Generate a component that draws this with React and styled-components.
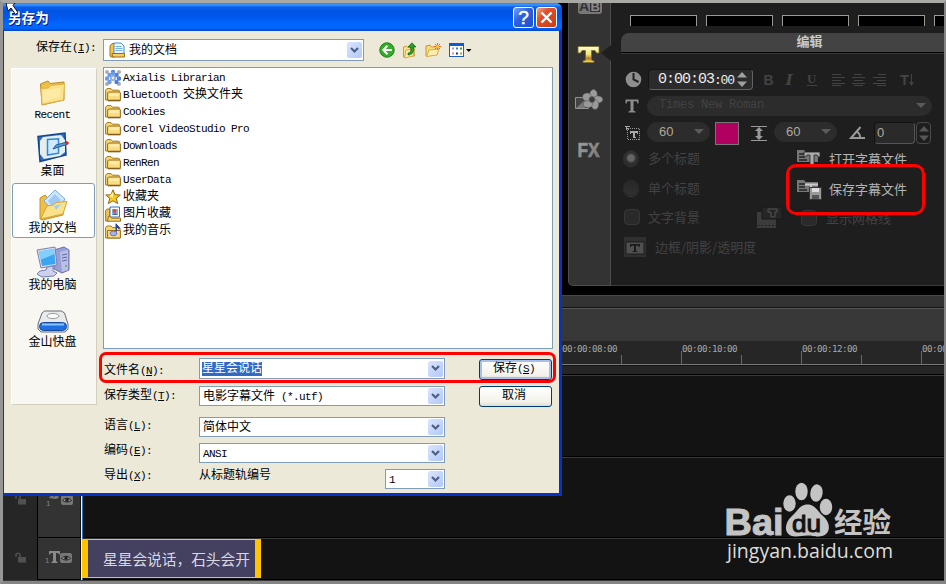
// App.jsx
import React from 'react';
import styled, { createGlobalStyle, css } from 'styled-components';

const GlobalStyle = createGlobalStyle`
  * { box-sizing: border-box; }
  body {
    margin: 0;
    background: #131313;
    font-family: "Liberation Mono", "Noto Sans CJK SC", sans-serif;
    font-size: 12px;
    overflow: hidden;
  }
  svg { display: block; flex: none; }
`;

/* ---------- text ---------- */

const Latin = styled.span`
  font-size: 11px;
  letter-spacing: -0.6px;
  white-space: pre;
`;

// Chinese glyphs take 12px, latin ones half of that
const Mixed = ({ text, hotkey, colon }) => (
  <>
    {text.split(/([\x20-\x7e]+)/).filter(Boolean).map((part, i) => (
      /[\x20-\x7e]/.test(part) ? <Latin key={i}>{part}</Latin> : part
    ))}
    {hotkey && <Latin>(<u>{hotkey}</u>){colon && ':'}</Latin>}
  </>
);

/* ---------- frame ---------- */

const Frame = styled.div`
  position: relative;
  width: 946px;
  height: 584px;
  border-style: solid;
  border-width: 3px 2px 3px 3px;
  border-color: #a9a9a5 #858585 #858585 #969696;
  background: #000;
  overflow: hidden;
  display: flex;
  flex-direction: column;
`;

/* ---------- editor: upper part ---------- */

const Workspace = styled.div`
  display: flex;
  height: 292px;
  padding: 0 0 9px 565px;
  flex: none;
`;

const Sidebar = styled.div`
  position: relative;
  width: 43px;
  background: #333;
  border: 1px solid #4d4d4d;
  border-top: 0;
  border-radius: 0 0 0 5px;
  display: flex;
  flex-direction: column;
  align-items: center;
  flex: none;
`;

const Notch = styled.div`
  position: absolute;
  right: -1px;
  top: 42px;
  border: 8px solid transparent;
  border-left: 0;
  border-right: 10px solid #1e1e1e;
`;

const Panel = styled.div`
  flex: 1;
  background: #1e1e1e;
  border-bottom: 1px solid #3c3c3c;
  padding-top: 12px;
  overflow: hidden;
`;

const Swatches = styled.div`
  display: flex;
  gap: 9px;
  height: 11px;
  padding-left: 19px;
`;

const Swatch = styled.div`
  width: 67px;
  flex: none;
  background: #000;
  border: 1px solid #9a9a92;
  border-bottom: 0;
`;

const TabTitle = styled.div`
  height: 21px;
  margin: 7px 0 0 10px;
  padding: 0 0 0 54px;
  background: #434343;
  border-bottom: 1px solid #3a3a3a;
  box-shadow: inset 0 -1px #000;
  border-radius: 8px 0 0 0;
  color: #c8c8c8;
  font: bold 13px/16px "Noto Sans CJK SC", sans-serif;
  text-align: center;
`;

const ControlRow = styled.div`
  display: flex;
  align-items: ${p => p.$align || 'center'};
  height: ${p => p.$h}px;
  margin-top: ${p => p.$top}px;
  padding-left: 14px;
`;

const Gap = styled.div`
  width: ${p => p.$w}px;
  height: ${p => p.$h || 1}px;
  flex: none;
`;

const Drop = styled.div`
  padding-top: ${p => p.$top}px;
`;

const TimeBox = styled.div`
  width: 105px;
  height: 21px;
  border: 1px solid #151515;
  border-right-color: #626262;
  border-bottom-color: #626262;
  border-radius: 4px;
  background: #2b2b2b;
  color: #eee;
  display: flex;
  align-items: center;
  padding-left: 9px;
  font: 15px/19px "Liberation Mono", monospace;
  letter-spacing: -1px;
  flex: none;
  small { font-size: 13px; letter-spacing: -1.2px; width: 23px; padding-top: 2px; }
`;

const Pill = styled.div`
  width: ${p => p.$w}px;
  height: 20px;
  border-radius: 10px;
  background: #2c2c2c;
  color: ${p => p.$color || '#b0a898'};
  display: flex;
  align-items: center;
  justify-content: space-between;
  padding: 0 6px 1px 12px;
  font: ${p => p.$size || 13}px/15px "${p => p.$mono ? 'Liberation Mono' : 'Liberation Sans'}", sans-serif;
  letter-spacing: ${p => p.$spacing || 0}px;
  flex: none;
`;

const PillCaret = styled.i`
  border: 5px solid transparent;
  border-top-color: #5a5a5a;
  border-bottom: 0;
`;

const ColorBox = styled.div`
  width: 24px;
  height: 23px;
  border: 1px solid #777;
  background: #b1005f;
  flex: none;
`;

const AngleBox = styled.div`
  width: 41px;
  height: 22px;
  border: 1px solid #111;
  border-right-color: #555;
  border-bottom-color: #555;
  border-radius: 4px;
  background: #2a2a2a;
  color: #b0a898;
  padding-left: 2px;
  font: 13px/19px "Liberation Sans", sans-serif;
`;

const Spinner = styled.div`
  width: 15px;
  height: 22px;
  margin-left: 1px;
  border: 1px solid #4a4a4a;
  border-radius: 4px;
  display: flex;
  align-items: center;
  justify-content: center;
`;

const Options = styled.div`
  display: flex;
  padding-left: 12px;
  margin-top: 5px;
`;

const OptionColumn = styled.div`
  width: ${p => p.$w}px;
  flex: none;
`;

const Option = styled.div`
  display: flex;
  align-items: center;
  height: 30px;
  margin-top: ${p => p.$top || 0}px;
  padding-left: ${p => p.$indent || 0}px;
  gap: ${p => p.$gap || 9}px;
  color: ${p => p.$bright ? '#b4b4b4' : '#424242'};
  font: 13px/30px "Noto Sans CJK SC", sans-serif;
  white-space: nowrap;
`;

const Radio = styled.i`
  width: 16px;
  height: 16px;
  border-radius: 50%;
  border: 1px solid #2b2b2b;
  background: ${p => p.$on
    ? 'radial-gradient(circle, #666 0 3px, #303030 5px)'
    : 'linear-gradient(#272727, #313131)'};
  box-shadow: 0 1px 1px #3a3a3a;
  flex: none;
`;

const Check = styled.i`
  width: 16px;
  height: 16px;
  border-radius: 4px;
  border: 1px solid #383838;
  background: #2a2a2a;
  flex: none;
`;

/* ---------- editor: timeline ---------- */

const ToolStrip = styled.div`
  height: 13px;
  background: #333;
  border-top: 1px solid #484848;
  border-bottom: 1px solid #151515;
  flex: none;
`;

const ToolBand = styled.div`
  height: 33px;
  background: #383838;
  border-top: 1px solid #555;
  flex: none;
`;

const Ruler = styled.div`
  height: 24px;
  padding-left: 438px;
  background: #262626;
  border-bottom: 1px solid #777;
  display: flex;
  overflow: hidden;
  flex: none;
`;

const Tick = styled.div`
  width: 120px;
  height: 24px;
  flex: none;
  padding-left: 1px;
  color: #a8a8a8;
  font: 9.2px/15px "DejaVu Sans Mono", monospace;
  letter-spacing: -0.54px;
  background:
    linear-gradient(#666, #666) 0 10px / 1px 14px no-repeat,
    linear-gradient(#666, #666) 60px 14px / 1px 10px no-repeat;
`;

const RulerFoot = styled.div`
  height: 10px;
  background: #252525;
  border-top: 1px solid #151515;
  border-bottom: 1px solid #000;
  flex: none;
`;

const Track = styled.div`
  display: flex;
  height: ${p => p.$h}px;
  background: #131313;
  border-bottom: 1px solid #000;
  border-top: 1px solid #393939;
  flex: none;
`;

const LockCell = styled.div`
  width: 35px;
  margin: -1px 0;
  background: #262626;
  border-right: 1px solid #000;
  padding: ${p => p.$top}px 0 0 12px;
`;

const TrackHead = styled.div`
  width: 43px;
  background: #333;
  border-right: 1px solid #111;
  padding: ${p => p.$top}px 0 0 7px;
`;

const Playhead = styled.div`
  width: 2px;
  margin: -1px 0;
  background: #f4f4f4;
  border-right: 1px solid #2d6db5;
`;

const Clip = styled.div`
  width: 179px;
  height: 39px;
  margin-left: -1px;
  border: solid #ffc400;
  border-width: 1px 6px;
  background: #444060;
  color: #d8d8e4;
  padding-left: 15px;
  font: 14.7px/38px "Noto Sans CJK SC", sans-serif;
  white-space: nowrap;
  overflow: hidden;
`;

/* ---------- dialog ---------- */

const Dialog = styled.div`
  position: absolute;
  left: 0;
  top: 0;
  width: 559px;
  height: 493px;
  background: #ece9d8;
  border: solid #0831c8;
  border-width: 0 3px 3px 1px;
  border-radius: 6px 6px 0 0;
  color: #000;
  line-height: 16px;
`;

const TitleBar = styled.div`
  height: 28px;
  margin: 0 -3px 0 -1px;
  padding: 0 5px 0 5px;
  border-radius: 0 6px 0 0;
  background: linear-gradient(#2f83f2 0, #3c95ff 2px, #0a60ec 4px, #0054e3 8px, #0058ee 15px, #0066ff 20px, #0066ff 25px, #0045c8 28px);
  display: flex;
  align-items: center;
  gap: 2px;
`;

const Title = styled.div`
  flex: 1;
  color: #fff;
  font: bold 13.6px/28px "Noto Sans CJK SC", sans-serif;
  text-shadow: 1px 1px #0a1883;
`;

const CaptionButton = styled.div`
  width: 21px;
  height: 21px;
  margin-top: 1px;
  border: 1px solid #fff;
  border-radius: 3px;
  background: ${p => p.$close
    ? 'linear-gradient(135deg, #f0a088, #e0502c 35%, #c83c14)'
    : 'linear-gradient(135deg, #7aa2f4, #2f62e0 40%, #1c50d0)'};
  display: flex;
  align-items: center;
  justify-content: center;
  color: #fff;
  font: 19px/19px "Liberation Sans", sans-serif;
  -webkit-text-stroke: 0.5px #fff;
`;

const LookInRow = styled.div`
  display: flex;
  height: 36px;
  padding: 8px 0 0 32px;
`;

const LookInLabel = styled.div`
  width: 67px;
  padding-top: 1px;
  white-space: nowrap;
`;

const DialogTools = styled.div`
  display: flex;
  align-items: center;
  height: 22px;
  padding-left: 15px;
  gap: 7px;
`;

const Combo = styled.div`
  width: ${p => p.$w}px;
  height: ${p => p.$h || 20}px;
  border: 1px solid #7f9db9;
  background: #fff;
  display: flex;
  align-items: center;
  padding: 0 1px 0 ${p => p.$pad || 3}px;
  gap: 3px;
  flex: none;
`;

const ComboText = styled.div`
  flex: 1;
  padding-top: 1px;
  white-space: nowrap;
`;

const Selected = styled.span`
  display: inline-block;
  height: 14px;
  line-height: 14px;
  background: #316ac5;
  color: #fff;
  margin-left: -1px;
`;

const DropButton = styled.div`
  width: 15px;
  height: 16px;
  border-radius: 2px;
  background: linear-gradient(135deg, #dbe5fd, #b0c8f8);
  display: flex;
  align-items: center;
  justify-content: center;
`;

const Main = styled.div`
  display: flex;
  padding-left: 7px;
`;

const Places = styled.div`
  width: 86px;
  height: 337px;
  margin: 1px 6px 0 0;
  border: 1px solid #fff;
  border-right-color: #d4d0c0;
  border-bottom-color: #d4d0c0;
  background: #f8f7f2;
  flex: none;
`;

const Place = styled.div`
  height: 55px;
  margin: 0 1px 2px 0;
  border: 1px solid transparent;
  border-radius: 3px;
  display: flex;
  flex-direction: column;
  align-items: center;
  justify-content: flex-end;
  padding: 0 2px 0 0;
  ${p => p.$active && css`
    background: #fff;
    border-color: #7f9db9;
  `}
`;

const PlaceIcon = styled.div`
  height: ${p => p.$h}px;
  display: flex;
  align-items: flex-start;
`;

const FileList = styled.div`
  width: 450px;
  height: 282px;
  border: 1px solid #7f9db9;
  background: #fff;
  padding: 1px;
`;

const FileRow = styled.div`
  display: flex;
  align-items: center;
  height: 17px;
  gap: 2px;
  white-space: nowrap;
`;

const Form = styled.div`
  width: 450px;
  padding-top: 9px;
`;

const FormRow = styled.div`
  display: flex;
  height: ${p => p.$h}px;
  padding-left: 1px;
`;

const FormLabel = styled.div`
  width: ${p => p.$w || 95}px;
  margin-top: ${p => p.$top || 0}px;
  white-space: nowrap;
`;

const Button = styled.div`
  width: 73px;
  height: 21px;
  margin-left: 34px;
  margin-top: ${p => p.$top || 0}px;
  border: 1px solid #003c74;
  border-radius: 3px;
  background: linear-gradient(#fff, #f3f2ea 80%, #dedacc);
  box-shadow: ${p => p.$primary ? 'inset 0 0 0 2px #a5bff0' : 'none'};
  padding-right: 3px;
  text-align: center;
  line-height: 19px;
`;

const Callout = styled.div`
  position: absolute;
  left: ${p => p.$x - 3}px;
  top: ${p => p.$y - 3}px;
  width: ${p => p.$w}px;
  height: ${p => p.$h}px;
  border: 3px solid #f00;
  border-radius: ${p => p.$r}px;
`;

const Watermark = styled.svg`
  position: absolute;
  left: 717px;
  top: 475px;
`;

const Cursor = styled.svg`
  position: absolute;
  left: 2px;
  top: 0;
`;

/* ---------- icons ---------- */

const FolderIcon = () => (
  <svg width="16" height="15" viewBox="0 0 16 15">
    <path d="M.6 13V3.2L2 1.6h4l1.4 1.600h6.400l.8 1V13z" fill="#f7d774" stroke="#a4761c" />
    <path d="M2.600 13.200V6l1-1h10.800l1 .8v7.400z" fill="#f9dd85" stroke="#9a6c18" />
    <path d="M4 7h10M4 8.200h10" stroke="#fff3bc" />
    <path d="M3 13.800h12.500" stroke="#775012" />
  </svg>
);

const GearIcon = () => (
  <svg width="16" height="16" viewBox="0 0 16 16">
    {[[2, 2], [14, 2], [2, 14], [14, 14]].map(([x, y]) => <circle key={x + '-' + y} cx={x} cy={y} r="2" fill="#aaacb4" />)}
    {[[8, 2], [4.500, 5], [11.500, 5], [2, 8.500], [14, 8.500], [4.500, 12], [11.500, 12], [8, 3.500]].map(([x, y], i) => (
      <circle key={i} cx={x} cy={y} r="2.200" fill={i % 2 ? '#6a9cec' : '#4c80dc'} />
    ))}
    <circle cx="8" cy="8" r="3" fill="#8fa6cf" /><circle cx="8" cy="8" r="1.400" fill="#dfe8f8" />
  </svg>
);

const StarIcon = () => (
  <svg width="16" height="16" viewBox="0 0 16 16">
    <path d="M8 .8l2 4.900 5.300.3-4.100 3.400 1.500 5.200L8 11.800l-4.700 2.800 1.500-5.200L.7 6 6 5.700z" fill="#fcc81e" stroke="#916914" />
    <path d="M8 3v6L4.500 7z" fill="#fff29c" />
  </svg>
);

const PicturesIcon = () => (
  <svg width="16" height="16" viewBox="0 0 16 16">
    <path d="M.6 15V4.500L2 3h3v12z" fill="#f0c350" stroke="#a4761c" />
    <path d="M5 1h9.500v10H5z" fill="#fff" stroke="#3770b0" />
    <path d="M7 3h6v6H7z" fill="#79b7f2" /><circle cx="9.500" cy="5" r="2" fill="#de4b38" /><path d="M7 9l3-2 3 2z" fill="#3b6fbc" />
    <path d="M2.500 15.200l1-5H5l1.500 2h9v3z" fill="#f7d774" stroke="#9a6c18" />
  </svg>
);

const MusicIcon = () => (
  <svg width="16" height="16" viewBox="0 0 16 16">
    <path d="M.6 15V4.600L2 3h4l1.400 1.600H15V15z" fill="#f7d774" stroke="#a4761c" />
    <path d="M2.600 15V7.500h12.800V15z" fill="#f9dd85" stroke="#9a6c18" />
    <path d="M11 11V.8c1 2 3.500 2 3 5-1-1.500-2-1.500-2-1.500" fill="#364a9a" stroke="#2b3d86" />
    <ellipse cx="8.500" cy="10.500" rx="3.300" ry="2.400" fill="#a9b3e8" stroke="#6c78c0" />
  </svg>
);

const DocsIcon = () => (
  <svg width="17" height="16" viewBox="0 0 17 16">
    <path d="M1 14V4l2-2.500h3V15H2z" fill="#f0c350" stroke="#a4761c" />
    <path d="M5 1h7l3 3v8H5z" fill="#eef7ff" stroke="#4a8bcb" />
    <path d="M6.500 4.500h6M6.500 6.500h7M6.500 8.500h7" stroke="#74b3e6" />
    <path d="M3.500 15l-.5-3.500h12.500V15z" fill="#f6cf6b" stroke="#9a6c18" />
  </svg>
);

const BigFolderIcon = () => (
  <svg width="27" height="26" viewBox="0 0 27 26">
    <path d="M1.500 4L9 1l2.500 2.500L25 2v18L3 25z" fill="#eebf45" stroke="#b98a26" />
    <path d="M2 8.500L9.500 8l2-2.500L25.500 4l-1 16L3 24.500z" fill="#fbe18a" stroke="#e0b649" />
    <path d="M4 10l18-2-1 9L4 22z" fill="#fdefb0" opacity=".7" />
  </svg>
);

const DesktopIcon = () => (
  <svg width="32" height="31" viewBox="0 0 32 31">
    <path d="M1 4.500L28 1l1 22-26 6.500z" fill="#2f6fc8" stroke="#15468f" strokeWidth="1.500" />
    <path d="M6 5l18-2 4 5v12l-5 4-16 3-4-5V9z" fill="#e4efec" />
    <path d="M10.500 7.500l11-.8v14.500l-11 1.800z" fill="#cdeafe" stroke="#3187d6" strokeWidth="1.500" />
    <path d="M16 17l3-4 11-3v2.500L20 15.500z" fill="#5a9ad8" stroke="#235a98" />
    <circle cx="30" cy="11" r="1.800" fill="#d02b20" />
  </svg>
);

const MyDocsIcon = () => (
  <svg width="30" height="32" viewBox="0 0 30 32">
    <path d="M2 9l5-3 3 3 16 1-1 16-20 5-3-1z" fill="#eebf45" stroke="#c4942c" />
    <path d="M6 12L17 1l10 9-10 14z" fill="#cfe6fc" stroke="#75a9dc" />
    <path d="M10 12l7-7 6 6-8 8z" fill="#9dc9f4" />
    <path d="M2.500 30L9 17l6-1 3-2.500 11-1L25 25z" fill="#fbe18a" stroke="#d5a434" />
    <path d="M16 17l7-2-5 6z" fill="#9dcdf4" />
  </svg>
);

const ComputerIcon = () => (
  <svg width="34" height="32" viewBox="0 0 34 32">
    <path d="M18 4l10-3 5 3v20l-7 3-8-4z" fill="#9aa0d4" stroke="#6b6fae" />
    <path d="M24 6l8-2v20l-6 2z" fill="#b9bfe6" />
    <path d="M26 9l5-1M26 12l5-1M26 15l5-1" stroke="#6066a2" /><circle cx="30" cy="20" r="1" fill="#4fbf3c" />
    <path d="M11 21l6-1v5l4 2-3 3-12 1-5-3 3-3 6-1z" fill="#cdd1ec" stroke="#777cae" />
    <path d="M1 4l18-3 2 18-16 3z" fill="#d9ddf0" stroke="#7a80b4" />
    <path d="M3 5.500l15-2.500 1.500 15L6 20z" fill="#3ba5f0" /><path d="M3 5.500L18 3l.5 5L4.500 14z" fill="#83d0fc" />
  </svg>
);

const DriveIcon = () => (
  <svg width="32" height="23" viewBox="0 0 32 23">
    <path d="M7.500 1h17l3 2 3.500 11v5l-3 3H4l-3-3v-5L5 3z" fill="#e9eaec" stroke="#696c70" />
    <ellipse cx="16" cy="6" rx="6" ry="2.600" fill="#f9f9f9" stroke="#999" />
    <rect x="2.500" y="12.500" width="27" height="8" rx="4" fill="#1d6fe2" stroke="#184a9c" />
    <path d="M5 14.500h22" stroke="#8ac2ff" strokeWidth="2" />
  </svg>
);

const Chevron = () => (
  <svg width="9" height="7" viewBox="0 0 9 7"><path d="M1 1l3.500 3.500L8 1" fill="none" stroke="#4d6185" strokeWidth="2.200" /></svg>
);

const BackIcon = () => (
  <svg width="16" height="16" viewBox="0 0 16 16">
    <circle cx="8" cy="8" r="7.200" fill="#32ad27" stroke="#1c7c18" />
    <path d="M8.500 3.800L4.300 8l4.200 4.200M4.800 8H13" fill="none" stroke="#fff" strokeWidth="2" />
  </svg>
);

const UpIcon = () => (
  <svg width="16" height="17" viewBox="0 0 16 17">
    <path d="M1.500 15V5l3-1 1 1.500 6-.5 1 9z" fill="#fae08a" stroke="#cc9b33" />
    <path d="M2.500 16l1.500-8 9-1-2 7z" fill="#fdeeb0" stroke="#d9ab45" />
    <path d="M6 11c3 0 3-3 2.500-6H6L10 .8 14 5h-2.500c1 6-2 8-5.500 8z" fill="#2c9b28" stroke="#146416" strokeWidth=".7" />
  </svg>
);

const NewFolderIcon = () => (
  <svg width="17" height="16" viewBox="0 0 17 16">
    <path d="M1 14V4l4-.8L6.500 5l6-.5V12z" fill="#f8dc7c" stroke="#c8962f" />
    <path d="M1.500 14.500L4 8l10-1-2 6z" fill="#fdeeb0" stroke="#d9ab45" />
    <path d="M12.500 1v7M9 4.500h7M10 2l5 5M15 2l-5 5" stroke="#f05a24" /><circle cx="12.500" cy="4.500" r="1.500" fill="#ffd03c" />
  </svg>
);

const ViewIcon = () => (
  <svg width="24" height="15" viewBox="0 0 24 15">
    <rect x=".5" y=".5" width="14" height="13" fill="#fff" stroke="#1e5fbe" /><path d="M0 1.500h15" stroke="#0b5cd0" strokeWidth="3" />
    <path d="M3 5.500h2" stroke="#a898c0" strokeWidth="2" /><path d="M3 10.500h2" stroke="#f09078" strokeWidth="2" />
    <path d="M7 5.500h2" stroke="#3c80e0" strokeWidth="2" /><path d="M7 10.500h2" stroke="#1c30a0" strokeWidth="2" />
    <path d="M11 5.500h2" stroke="#3a9c3a" strokeWidth="2" /><path d="M11 10.500h2" stroke="#c09a20" strokeWidth="2" />
    <path d="M17 6h5.500l-2.700 3z" fill="#000" />
  </svg>
);

const SideIcons = () => (
  <svg width="41" height="170" viewBox="0 0 41 170">
    <defs>
      <linearGradient id="gold" x1="0" y1="0" x2="0" y2="1"><stop offset="0" stopColor="#fffbd8" /><stop offset=".5" stopColor="#f4e46c" /><stop offset=".75" stopColor="#b57a2c" /><stop offset="1" stopColor="#ffe94a" /></linearGradient>
      <linearGradient id="steel" x1="0" y1="0" x2="1" y2="1"><stop offset="0" stopColor="#a8a8a8" /><stop offset="1" stopColor="#707070" /></linearGradient>
    </defs>
    <rect x="9" y="-6" width="24" height="17" rx="3" fill="#777" />
    <path d="M21 -3h10v12H21z" fill="#333" />
    <text x="10" y="8" fontSize="14" fontWeight="bold" fontFamily="Liberation Sans" fill="#333">A</text>
    <text x="21.500" y="8" fontSize="13" fontWeight="bold" fontFamily="Liberation Sans" fill="#8a8a8a">B</text>
    <path d="M9 43.500h21V50h-2.500l-1.500-2.500h-3.500V57l2.500 1v1.500H14V58l2.500-1v-9.500H13L11.500 50H9z" fill="url(#gold)" stroke="#786c2c" strokeWidth=".8" />
    <path d="M6.500 94.500h13v11h-13z" fill="#444" stroke="#929292" /><path d="M7 105l9-8v8z" fill="#777" />
    <g fill="#9a9a9a" stroke="#555" strokeWidth=".5">
      <ellipse cx="24.500" cy="91.500" rx="3.800" ry="5" /><ellipse cx="29" cy="96.500" rx="4.800" ry="3.600" /><ellipse cx="26" cy="101.500" rx="3.700" ry="5" />
      <ellipse cx="19" cy="101" rx="4.500" ry="3.600" /><ellipse cx="18" cy="94" rx="4.500" ry="4" />
    </g>
    <circle cx="23" cy="96.500" r="3" fill="#3a3a3a" stroke="#666" />
    <text x="8.500" y="153.500" fontSize="20.500" fontWeight="bold" fontFamily="Liberation Sans" textLength="22" lengthAdjust="spacingAndGlyphs" fill="url(#steel)" stroke="#8c8c8c" strokeWidth=".7">FX</text>
  </svg>
);

const ClockIcon = () => (
  <svg width="17" height="17" viewBox="0 0 17 17"><circle cx="8.500" cy="8.500" r="7.800" fill="#8f8f8f" /><path d="M8.500 2v6.500l5 2.500" fill="none" stroke="#222" strokeWidth="2" /></svg>
);

const TIcon = () => (
  <svg width="14" height="14" viewBox="0 0 14 14"><path d="M.5.5h13v4h-1L11.500 2.300H8.500v9.500l2 .7v1h-7v-1l2-.7V2.300h-3L1.500 4.500h-1z" fill="#8c8c8c" /></svg>
);

const SizeIcon = () => (
  <svg width="16" height="16" viewBox="0 0 16 16" shapeRendering="crispEdges">
    <path d="M2.500 3.500h12v11h-12z" fill="none" stroke="#999" strokeDasharray="1 1" />
    <path d="M0 1l4 4M1.500 5V1.500h3" stroke="#aaa" fill="none" /><path d="M5 6h8v3h-1l-1-1.500h-1V12l1 1H7l1-1V7.500H7L6 9H5z" fill="#aaa" />
  </svg>
);

const SpacingIcon = () => (
  <svg width="16" height="17" viewBox="0 0 16 17"><path d="M0 1.500h16M0 15.500h16" stroke="#999" /><path d="M8 2l4 4H9.500v5H12l-4 4-4-4h2.500V6H4z" fill="#999" /></svg>
);

const AngleIcon = () => (
  <svg width="17" height="15" viewBox="0 0 17 15"><path d="M16 13H2L11.500 2M8 6.500c2 1.500 3 3.500 3 6" fill="none" stroke="#999" strokeWidth="2" /></svg>
);

const UpDown = ({ color }) => (
  <svg width="10" height="15" viewBox="0 0 10 15"><path d="M0 5.500L5 0l5 5.500zM0 9.500L5 15l5-5.500z" fill={color} /></svg>
);

const FormatIcons = () => (
  <svg width="152" height="14" viewBox="0 0 152 14" stroke="#434343" fill="#434343">
    <g stroke="none" fontWeight="bold" fontFamily="Liberation Sans" fontSize="14">
      <text x="-.5" y="12">B</text>
      <text x="21" y="12" fontStyle="italic" fontFamily="Liberation Serif" fontSize="16" textLength="8" lengthAdjust="spacingAndGlyphs">I</text>
      <text x="43" y="10" fontFamily="Liberation Serif" fontSize="13">U</text>
      <text x="136" y="12" fontSize="15" textLength="9" lengthAdjust="spacingAndGlyphs">T</text>
    </g>
    <path d="M43 12.500h10" />
    <path d="M67.500 1.500h9M67.500 4.500h13M67.500 7.500h9M67.500 10.500h13M67.500 12.500h9M90 1.500h8M88 4.500h13M90 7.500h9M88 10.500h13M90 12.500h9M114 1.500h8M109 4.500h13M113 7.500h9M109 10.500h13M113 12.500h9" shapeRendering="crispEdges" />
    <path d="M147.500 1v10" /><path d="M145 9h5l-2.500 4z" stroke="none" />
  </svg>
);

const SubtitleIcon = ({ save }) => (
  <svg width="27" height="23" viewBox="0 0 27 23">
    <path d="M1 2h7l1.500 2H22v10H1z" fill="#777" />
    <path d="M3 6h6M3 9h6M3 12h8" stroke="#222" strokeWidth="1.300" />
    {save ? (
      <>
        <path d="M9 6.500h13M15 7v6" stroke="#ccc" strokeWidth="2" />
        <path d="M13.500 9.500h12v12h-12z" fill="#999" stroke="#333" />
        <path d="M16 10h7v4h-7z" fill="#ddd" /><path d="M16 17h7v4h-7z" fill="#555" />
      </>
    ) : <path d="M8 4h16v5h-1.500L21 7h-3v10l2 1v1h-8v-1l2-1V7h-3L9.500 9H8z" fill="#aaa" stroke="#222" strokeWidth=".8" />}
  </svg>
);

const BackdropIcon = () => (
  <svg width="27" height="23" viewBox="0 0 27 23">
    <path d="M1 6h19v16H1z" fill="#3c3c3c" /><path d="M2 19.500h18" stroke="#191919" strokeDasharray="1.500 2" />
    <path d="M6 1h20v12H6z" fill="#262626" stroke="#181818" />
    <path d="M12 3h9v3h-2v5h-4V6h-3z" fill="#242424" stroke="#555" />
  </svg>
);

const BorderIcon = () => (
  <svg width="22" height="20" viewBox="0 0 22 20">
    <path d="M0 0h22v20H0z" fill="#303030" /><path d="M2 5h18v12H2z" fill="#505050" stroke="#1c1c1c" />
    <path d="M6 7h10v3h-1l-.5-1.300H12V14h1.500v1h-5v-1H10V8.700H7.500L7 10H6z" fill="#1c1c1c" />
  </svg>
);

const LockIcon = () => (
  <svg width="11" height="11" viewBox="0 0 11 11"><path d="M1 5V2.500C1 .8 5 .8 5 3v2" fill="none" stroke="#505050" strokeWidth="1.500" /><path d="M3 5h8v5.500H3z" fill="#505050" /></svg>
);

const EyeIcon = () => (
  <>
    <rect x="15" y="2" width="12" height="10" rx="2" fill="#777" />
    <path d="M16.500 7.500c2.500-3 6-3 9 0-3 2-6 2-9 0z" fill="#999" stroke="#222" /><circle cx="21" cy="7" r="1.800" fill="#222" />
  </>
);

const TitleTrackIcon = () => (
  <svg width="28" height="14" viewBox="0 0 28 14">
    <text x="0" y="12" fontSize="8" fontFamily="Liberation Sans" fill="#808080">1</text>
    <path d="M4 0h11v3.500h-1L13 2h-2v8l1.500 1v1h-6v-1L8 10V2H6L5 3.500H4z" fill="#8a8a8a" />
    <EyeIcon />
  </svg>
);

const OverlayTrackIcon = () => (
  <svg width="30" height="14" viewBox="0 0 30 14">
    <text x="1" y="13" fontSize="8" fontFamily="Liberation Sans" fill="#808080">1</text>
    <path d="M4 5l3-4 2 3 3-3 2 4-4 1z" fill="#777" />
    <g transform="translate(1 0)"><EyeIcon /></g>
  </svg>
);

/* ---------- data ---------- */

const places = [
  { label: 'Recent', Icon: BigFolderIcon, h: 27 },
  { label: '桌面', Icon: DesktopIcon, h: 32 },
  { label: '我的文档', Icon: MyDocsIcon, h: 32, active: true },
  { label: '我的电脑', Icon: ComputerIcon, h: 32 },
  { label: '金山快盘', Icon: DriveIcon, h: 25 },
];

const files = [
  { name: 'Axialis Librarian', Icon: GearIcon },
  { name: 'Bluetooth 交换文件夹', Icon: FolderIcon },
  { name: 'Cookies', Icon: FolderIcon },
  { name: 'Corel VideoStudio Pro', Icon: FolderIcon },
  { name: 'Downloads', Icon: FolderIcon },
  { name: 'RenRen', Icon: FolderIcon },
  { name: 'UserData', Icon: FolderIcon },
  { name: '收藏夹', Icon: StarIcon },
  { name: '图片收藏', Icon: PicturesIcon },
  { name: '我的音乐', Icon: MusicIcon },
];

const ticks = ['00:00:06:00', '00:00:08:00', '00:00:10:00', '00:00:12:00', '00:00:14:00'];

/* ---------- sections ---------- */

const EditPanel = () => (
  <Panel>
    <Swatches>
      {[0, 1, 2, 3, 4].map(i => <Swatch key={i} />)}
    </Swatches>
    <TabTitle>编辑</TabTitle>
    <ControlRow $h={21} $top={15}>
      <ClockIcon />
      <Gap $w={6} />
      <TimeBox>0:00:03<small>:00</small><UpDown color="#a0a0a0" /></TimeBox>
      <Gap $w={11} />
      <FormatIcons />
    </ControlRow>
    <ControlRow $h={19} $top={6}>
      <TIcon />
      <Gap $w={8} />
      <Pill $w={285} $color="#424242" $mono $size={12} $spacing={-0.2}>Times New Roman<PillCaret /></Pill>
    </ControlRow>
    <ControlRow $h={23} $top={7} $align="flex-start">
      <Drop $top={3}><SizeIcon /></Drop>
      <Gap $w={6} />
      <Pill $w={63}>60<PillCaret /></Pill>
      <Gap $w={5} />
      <ColorBox />
      <Gap $w={12} />
      <Drop $top={3}><SpacingIcon /></Drop>
      <Gap $w={7} />
      <Pill $w={63}>60<PillCaret /></Pill>
      <Gap $w={12} />
      <Drop $top={3}><AngleIcon /></Drop>
      <Gap $w={8} />
      <AngleBox>0</AngleBox>
      <Spinner><UpDown color="#555" /></Spinner>
    </ControlRow>
    <Options>
      <OptionColumn $w={133}>
        <Option $top={-7}><Radio $on />多个标题</Option>
        <Option><Radio />单个标题</Option>
        <Option $top={-1} $gap={8} $indent={1}><Check />文字背景</Option>
        <Option $gap={9} $indent={1}><BorderIcon />边框/阴影/透明度</Option>
      </OptionColumn>
      <OptionColumn $w={40}>
        <Gap $w={1} $h={56} />
        <BackdropIcon />
      </OptionColumn>
      <OptionColumn $w={140}>
        <Option $bright $gap={6} $top={-6}><SubtitleIcon />打开字幕文件</Option>
        <Option $bright $gap={6}><SubtitleIcon save />保存字幕文件</Option>
        <Option $top={-1} $indent={5}><Check />显示网格线</Option>
      </OptionColumn>
    </Options>
  </Panel>
);

const Timeline = () => (
  <>
    <ToolStrip />
    <ToolBand />
    <Ruler>
      {ticks.map(t => <Tick key={t}>{t}</Tick>)}
    </Ruler>
    <RulerFoot />
    <Track $h={82}><LockCell /><TrackHead /><Playhead /></Track>
    <Track $h={81}>
      <LockCell $top={37}><LockIcon /></LockCell>
      <TrackHead $top={35}><OverlayTrackIcon /></TrackHead>
      <Playhead />
    </Track>
    <Track $h={42}>
      <LockCell $top={14}><LockIcon /></LockCell>
      <TrackHead $top={12}><TitleTrackIcon /></TrackHead>
      <Playhead />
      <Clip>星星会说话，石头会开</Clip>
    </Track>
    <Track $h={2} />
  </>
);

const SaveDialog = () => (
  <Dialog>
    <TitleBar>
      <Title>另存为</Title>
      <CaptionButton>?</CaptionButton>
      <CaptionButton $close>
        <svg width="13" height="13" viewBox="0 0 13 13"><path d="M1.500 1.500l10 10M11.500 1.500l-10 10" stroke="#fff" strokeWidth="2.300" /></svg>
      </CaptionButton>
    </TitleBar>
    <LookInRow>
      <LookInLabel><Mixed text="保存在" hotkey="I" colon /></LookInLabel>
      <Combo $w={261} $h={22} $pad={5}>
        <DocsIcon />
        <ComboText>我的文档</ComboText>
        <DropButton><Chevron /></DropButton>
      </Combo>
      <DialogTools>
        <BackIcon /><UpIcon /><NewFolderIcon /><ViewIcon />
      </DialogTools>
    </LookInRow>
    <Main>
      <Places>
        {places.map(({ label, Icon, h, active }) => (
          <Place key={label} $active={active}>
            <PlaceIcon $h={h}><Icon /></PlaceIcon>
            <div><Mixed text={label} /></div>
          </Place>
        ))}
      </Places>
      <div>
        <FileList>
          {files.map(({ name, Icon }) => (
            <FileRow key={name}><Icon /><span><Mixed text={name} /></span></FileRow>
          ))}
        </FileList>
        <Form>
          <FormRow $h={28}>
            <FormLabel $top={5}><Mixed text="文件名" hotkey="N" colon /></FormLabel>
            <Combo $w={246} $h={21}>
              <ComboText><Selected>星星会说话</Selected></ComboText>
              <DropButton><Chevron /></DropButton>
            </Combo>
            <Button $primary $top={1}><Mixed text="保存" hotkey="S" /></Button>
          </FormRow>
          <FormRow $h={31}>
            <FormLabel $top={2}><Mixed text="保存类型" hotkey="T" colon /></FormLabel>
            <Combo $w={246}>
              <ComboText><Mixed text="电影字幕文件 (*.utf)" /></ComboText>
              <DropButton><Chevron /></DropButton>
            </Combo>
            <Button>取消</Button>
          </FormRow>
          <FormRow $h={26}>
            <FormLabel $top={1}><Mixed text="语言" hotkey="L" colon /></FormLabel>
            <Combo $w={246}>
              <ComboText>简体中文</ComboText>
              <DropButton><Chevron /></DropButton>
            </Combo>
          </FormRow>
          <FormRow $h={26}>
            <FormLabel><Mixed text="编码" hotkey="E" colon /></FormLabel>
            <Combo $w={246}>
              <ComboText><Mixed text="ANSI" /></ComboText>
              <DropButton><Chevron /></DropButton>
            </Combo>
          </FormRow>
          <FormRow $h={20}>
            <FormLabel $top={-1}><Mixed text="导出" hotkey="X" colon /></FormLabel>
            <FormLabel $top={-1} $w={186}>从标题轨编号</FormLabel>
            <Combo $w={60}>
              <ComboText><Mixed text="1" /></ComboText>
              <DropButton><Chevron /></DropButton>
            </Combo>
          </FormRow>
        </Form>
      </div>
    </Main>
  </Dialog>
);

const Logo = () => (
  <Watermark width="190" height="100" viewBox="720 478 190 100" fill="#c4c4c4">
    <text x="724.500" y="534.500" fontSize="37" fontWeight="bold" fontFamily="Liberation Sans" textLength="59" lengthAdjust="spacingAndGlyphs" stroke="#c4c4c4" strokeWidth="1">Bai</text>
    <ellipse cx="789.500" cy="503.500" rx="6.200" ry="8.200" />
    <ellipse cx="801.500" cy="491.500" rx="6.200" ry="8.700" />
    <ellipse cx="816.500" cy="493" rx="6.200" ry="8.700" transform="rotate(8 816.500 493)" />
    <ellipse cx="826" cy="507" rx="6.200" ry="8.200" />
    <path d="M807.500 504.500c8 0 10 7 15 11 10 8 8 21-4 21-5 0-6-1-11-1s-7 1-12 1c-12 0-12-13-4-20 6-5 8-12 16-12z" />
    <text x="792" y="531.500" fontSize="24" fontFamily="Liberation Sans" textLength="29" lengthAdjust="spacingAndGlyphs" fill="#131313" stroke="#131313" strokeWidth="1">du</text>
    <text x="834" y="533" fontSize="28" fontWeight="bold" fontFamily="Noto Sans CJK SC" textLength="57" lengthAdjust="spacingAndGlyphs">经验</text>
    <text x="727" y="557.500" fontSize="19.500" fontFamily="Open Sans" textLength="166" lengthAdjust="spacingAndGlyphs" fill="#ddd">jingyan.baidu.com</text>
  </Watermark>
);

const App = () => (
  <>
    <GlobalStyle />
    <Frame>
      <Workspace>
        <Sidebar>
          <SideIcons />
          <Notch />
        </Sidebar>
        <EditPanel />
      </Workspace>
      <Timeline />
      <SaveDialog />
      <Callout $x={99} $y={352} $w={457} $h={31} $r={7} />
      <Callout $x={786} $y={164} $w={139} $h={51} $r={10} />
      <Logo />
      <Cursor width="14" height="16" viewBox="0 0 14 16">
        <path d="M1 0h9L8 2.500l5 7-2.500 2-4.500-6.500-3 3z" fill="#fff" stroke="#111" />
      </Cursor>
    </Frame>
  </>
);

export default App;
